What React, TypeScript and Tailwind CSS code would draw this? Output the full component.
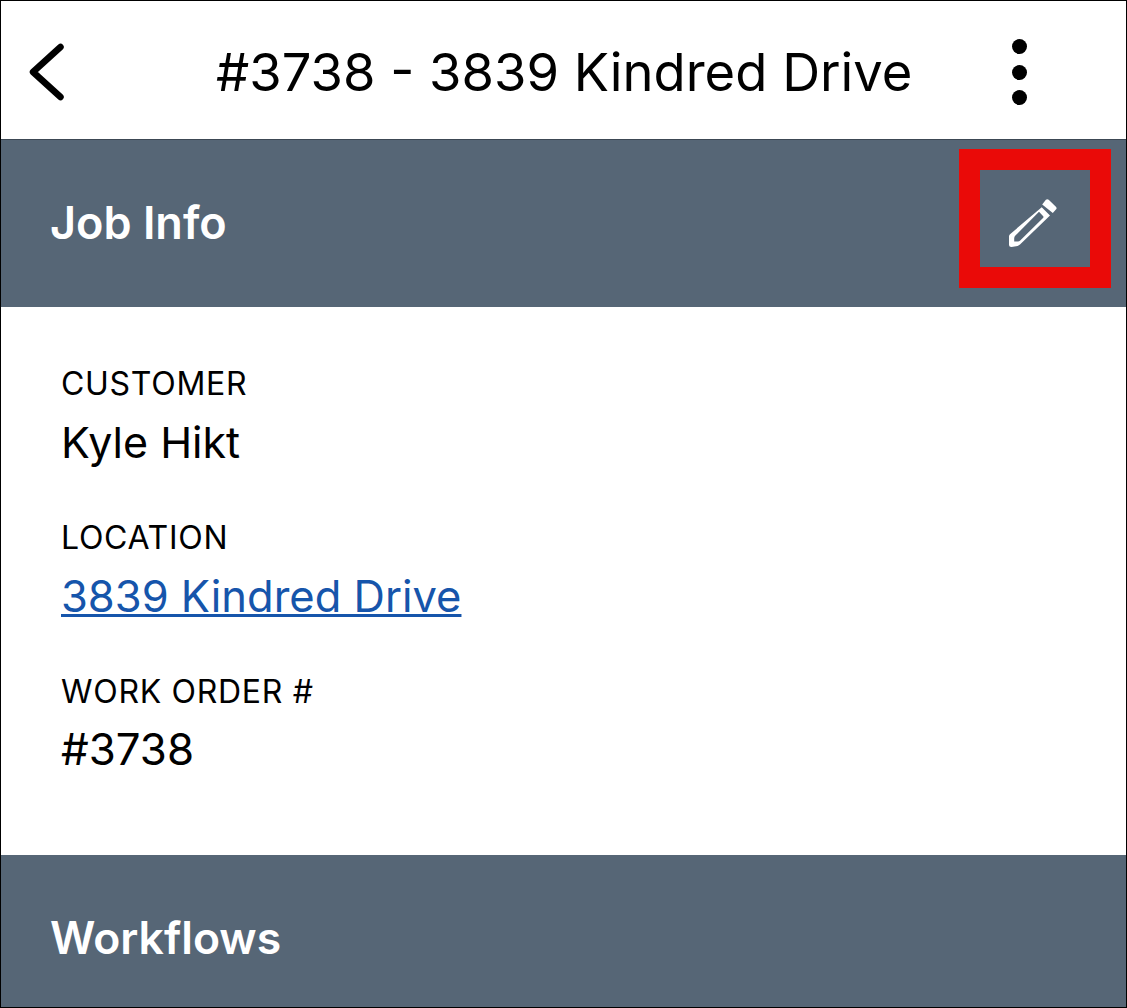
export default function App() {
  return (
    <div className="w-[1127px] h-[1008px] border border-black bg-white flex flex-col overflow-hidden font-['Inter','Liberation_Sans',sans-serif] text-black">
      <header className="h-[138px] shrink-0 flex items-center pt-[4px] pl-[28px] pr-[99.5px]">
        <svg className="shrink-0" width="36" height="58" viewBox="0 0 36 58" fill="none" stroke="black" strokeWidth="6.5" strokeLinecap="round" strokeLinejoin="round">
          <path d="M31.5 4 L4 29 L31.5 54" />
        </svg>
        <h1 className="ml-[151px] text-[52.5px] leading-none font-normal whitespace-nowrap">#3738 - 3839 Kindred Drive</h1>
        <div className="ml-auto flex flex-col gap-[10.5px]">
          <span className="block w-[15px] h-[15px] rounded-full bg-black" />
          <span className="block w-[15px] h-[15px] rounded-full bg-black" />
          <span className="block w-[15px] h-[15px] rounded-full bg-black" />
        </div>
      </header>
      <section className="h-[168px] shrink-0 bg-[#566676] border-t border-[#3c4854] flex items-center justify-between pl-[49px] pr-[15px]">
        <h2 className="text-[45px] leading-none font-semibold text-white -mt-[2px]">Job Info</h2>
        <div className="w-[152px] h-[139px] mb-[10px] border-[21px] border-[#ea0a08] flex items-center justify-center">
          <svg className="mt-[9px] mr-[4px]" width="48" height="48" viewBox="0 0 48 48" fill="white">
            <path fillRule="evenodd" d="M32.7 8.3 L41 16.5 L11 45.6 Q10 46.6 8.6 46.9 L2.5 48 Q0 48 0 45.5 L0 37.6 Q0 36.2 1 35.2 Z M30 12.8 L6.4 36.6 Q5.2 37.8 5.2 39.2 L5.2 42.4 L9 42.4 Q10.2 42.4 11.2 41.4 L34 19 Q35 18 34 17 Z" />
            <path d="M36.9 0.8 Q38.3 -0.5 39.7 0.8 L46.9 7.8 Q48.3 9.2 46.9 10.6 L43.8 14 L33.2 5.4 Z" />
          </svg>
        </div>
      </section>
      <main className="h-[548px] shrink-0 pl-[60px] pt-[55px] flex flex-col gap-[38px]">
        <div>
          <div className="text-[32px] tracking-[0.7px] leading-[44px]">CUSTOMER</div>
          <div className="text-[43px] leading-[72px]">Kyle Hikt</div>
        </div>
        <div>
          <div className="text-[32px] tracking-[0.7px] leading-[44px]">LOCATION</div>
          <div className="text-[43.5px] leading-[72px] text-[#1655ab] underline decoration-[3px]">3839 Kindred Drive</div>
        </div>
        <div>
          <div className="text-[32px] tracking-[0.7px] leading-[44px]">WORK ORDER #</div>
          <div className="text-[43.8px] leading-[72px]">#3738</div>
        </div>
      </main>
      <section className="flex-1 bg-[#566676] flex items-center pl-[49px] pt-[14px]">
        <h2 className="text-[44.5px] leading-none font-semibold text-white">Workflows</h2>
      </section>
    </div>
  );
}
